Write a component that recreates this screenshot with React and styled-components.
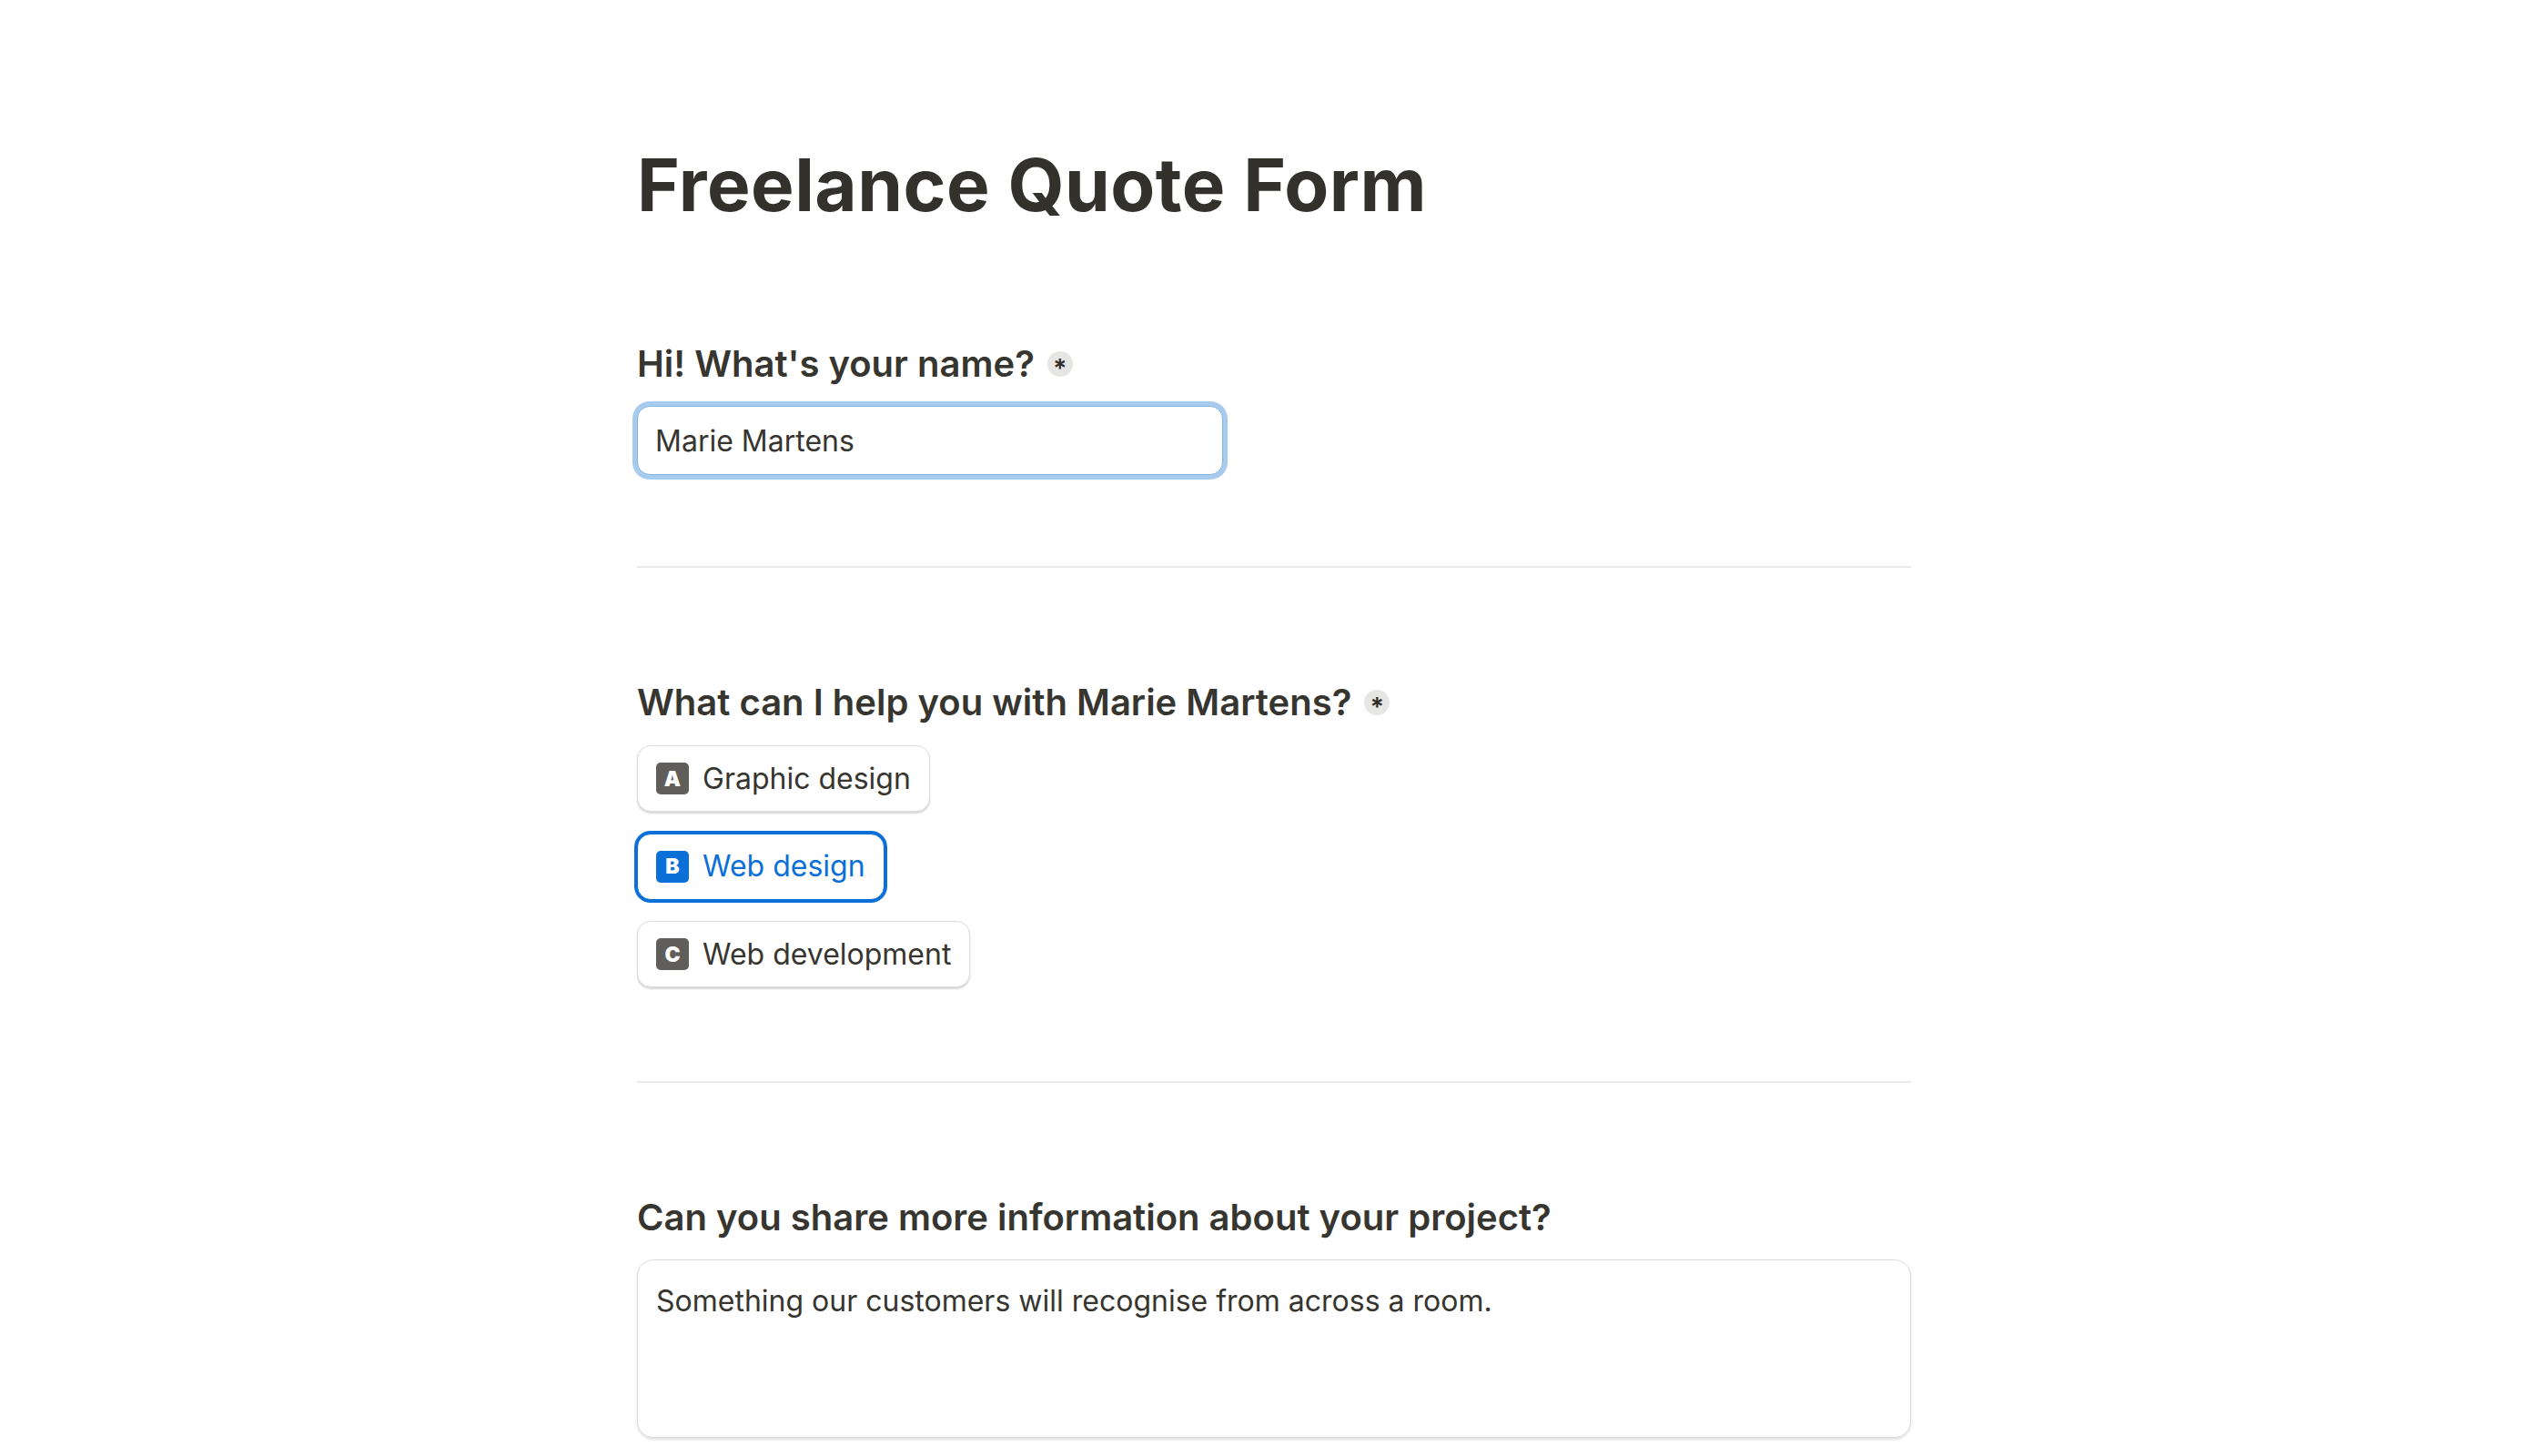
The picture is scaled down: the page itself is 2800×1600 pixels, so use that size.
import React from 'react';
import styled, { createGlobalStyle } from 'styled-components';

const GlobalStyle = createGlobalStyle`
  body {
    margin: 0;
    background: #ffffff;
    font-family: Inter, "Noto Sans", "Liberation Sans", sans-serif;
    color: #37352f;
  }
`;

const options = [
  { key: 'A', label: 'Graphic design' },
  { key: 'B', label: 'Web design', selected: true },
  { key: 'C', label: 'Web development' },
];

const App = () => {
  return (
    <>
      <GlobalStyle />
      <Page>
        <Title>Freelance Quote Form</Title>

        <Question>
          <Label>
            Hi! What's your name?
            <Required>
              <Star>*</Star>
            </Required>
          </Label>
          <NameInput type="text" defaultValue="Marie Martens" readOnly />
        </Question>

        <Divider />

        <Question>
          <Label>
            What can I help you with Marie Martens?
            <Required>
              <Star>*</Star>
            </Required>
          </Label>
          <OptionList>
            {options.map(opt => (
              <Option key={opt.key} selected={opt.selected}>
                <KeyBadge selected={opt.selected}>{opt.key}</KeyBadge>
                {opt.label}
              </Option>
            ))}
          </OptionList>
        </Question>

        <Divider />

        <Question>
          <Label>Can you share more information about your project?</Label>
          <Details
            defaultValue="Something our customers will recognise from across a room."
            readOnly
          />
        </Question>
      </Page>
    </>
  );
};

const Page = styled.div`
  width: 1400px;
  margin: 0 auto;
  padding: 155px 0 80px;
`;

const Title = styled.h1`
  margin: 0 0 125px;
  font-size: 80px;
  line-height: 96px;
  font-weight: 700;
  letter-spacing: 0.45px;
  color: #33312c;
`;

const Question = styled.div`
  display: flex;
  flex-direction: column;
  align-items: flex-start;
  gap: 22px;
`;

const Label = styled.div`
  display: flex;
  align-items: center;
  gap: 14px;
  font-size: 40px;
  line-height: 48px;
  font-weight: 600;
  color: #37352f;
`;

const Required = styled.span`
  width: 28px;
  height: 28px;
  border-radius: 50%;
  background: #e6e6e5;
  display: flex;
  align-items: center;
  justify-content: center;
  flex-shrink: 0;
`;

const Star = styled.span`
  color: #2f2d29;
  font-size: 28px;
  font-weight: 600;
  line-height: 1;
  transform: translateY(5px);
`;

const NameInput = styled.input`
  box-sizing: border-box;
  width: 644px;
  height: 76px;
  padding: 0 19px;
  border: 1px solid #86b3df;
  border-radius: 14px;
  box-shadow: 0 0 0 5px #a7cbee;
  font-family: inherit;
  font-size: 32px;
  color: #37352f;
  outline: none;
  background: #fff;
`;

const Divider = styled.hr`
  border: 0;
  height: 2px;
  background: #ebebea;
  margin: 100px 0 124px;
`;

const OptionList = styled.div`
  display: flex;
  flex-direction: column;
  align-items: flex-start;
  gap: 23.5px;
  margin: 1px 0 3px;
`;

const Option = styled.div`
  box-sizing: border-box;
  height: 73px;
  display: flex;
  align-items: center;
  gap: 15px;
  padding: 0 20px;
  border: 1px solid ${p => (p.selected ? '#0a6fd6' : '#dddddc')};
  border-radius: 15px;
  background: #fff;
  box-shadow: ${p =>
    p.selected
      ? '0 0 0 3px #0a6fd6'
      : '0 1.5px 2px rgba(0, 0, 0, 0.16)'};
  font-size: 32px;
  line-height: 40px;
  color: ${p => (p.selected ? '#0a6fd6' : '#37352f')};
  cursor: pointer;
`;

const KeyBadge = styled.span`
  width: 36px;
  height: 35px;
  border-radius: 5px;
  background: ${p => (p.selected ? '#0a6fd6' : '#5f5e5b')};
  color: #fff;
  font-size: 23px;
  font-weight: 900;
  display: flex;
  align-items: center;
  justify-content: center;
  flex-shrink: 0;
`;

const Details = styled.textarea`
  box-sizing: border-box;
  width: 100%;
  height: 196px;
  padding: 21px 20px;
  border: 1px solid #dcdcdb;
  border-radius: 18px;
  box-shadow: 0 2px 3px rgba(0, 0, 0, 0.12);
  font-family: inherit;
  font-size: 32px;
  line-height: 48px;
  color: #37352f;
  resize: none;
  outline: none;
  background: #fff;
`;

export default App;
